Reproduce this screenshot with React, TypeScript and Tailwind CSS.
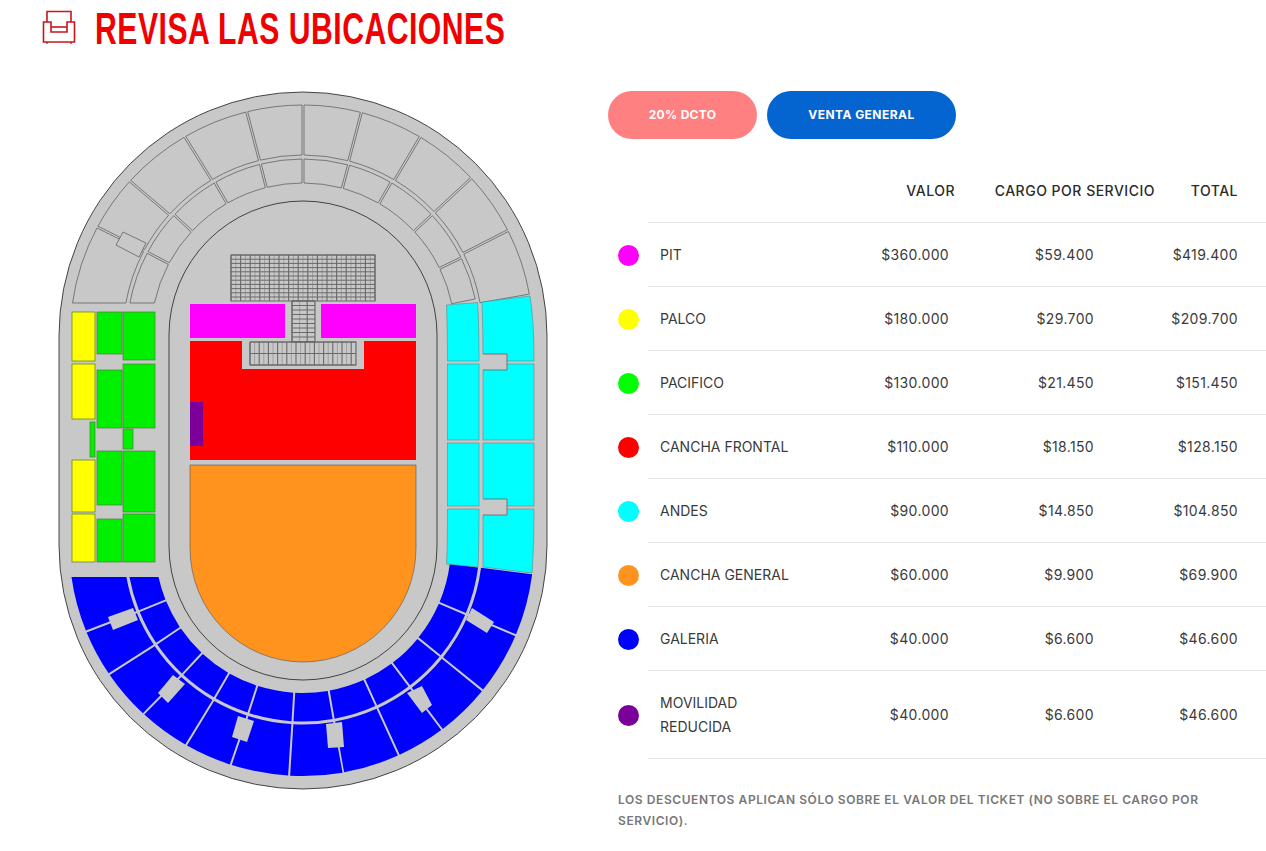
const rows = [
  { name: ["PIT"], color: "bg-[#ff00ff]", valor: "$360.000", cargo: "$59.400", total: "$419.400" },
  { name: ["PALCO"], color: "bg-[#ffff00]", valor: "$180.000", cargo: "$29.700", total: "$209.700" },
  { name: ["PACIFICO"], color: "bg-[#00ff00]", valor: "$130.000", cargo: "$21.450", total: "$151.450" },
  { name: ["CANCHA FRONTAL"], color: "bg-[#ff0000]", valor: "$110.000", cargo: "$18.150", total: "$128.150" },
  { name: ["ANDES"], color: "bg-[#00ffff]", valor: "$90.000", cargo: "$14.850", total: "$104.850" },
  { name: ["CANCHA GENERAL"], color: "bg-[#ff931e]", valor: "$60.000", cargo: "$9.900", total: "$69.900" },
  { name: ["GALERIA"], color: "bg-[#0000ff]", valor: "$40.000", cargo: "$6.600", total: "$46.600" },
  { name: ["MOVILIDAD", "REDUCIDA"], color: "bg-[#7b0099]", valor: "$40.000", cargo: "$6.600", total: "$46.600" },
]

const GRAY = "#c8c8c8"
const GREEN = "#00f000"
const CX = 303
const rad = (d: number) => (d * Math.PI) / 180
const deg = (r: number) => (r * 180) / Math.PI

// angle 0 points up for the top half (sign -1) and down for the bottom half (sign 1)
function sector(cy: number, sign: number, rOut: number, rIn: number, a1: number, a2: number, gap: number, flatStart: boolean, stretch: number) {
  const pt = (r: number, a: number, k: number) =>
    `${(CX + r * k * Math.sin(rad(a))).toFixed(2)} ${(cy + sign * r * Math.cos(rad(a))).toFixed(2)}`
  const inset = (r: number) => deg(gap / 2 / r)
  const start = (r: number) => (flatStart ? -deg(Math.acos(32 / r)) : a1 + inset(r))
  const sweep = sign < 0 ? 1 : 0
  return `M${pt(rOut, start(rOut), stretch)} A${rOut * stretch} ${rOut} 0 0 ${sweep} ${pt(rOut, a2 - inset(rOut), stretch)} L${pt(rIn, a2 - inset(rIn), 1)} A${rIn} ${rIn} 0 0 ${1 - sweep} ${pt(rIn, start(rIn), 1)} Z`
}

function Ring({ cy, sign, rOut, rIn, angles, fill, stroke, gap, stretch = 1 }: { cy: number; sign: number; rOut: number; rIn: number; angles: number[]; fill: string; stroke: string; gap: number; stretch?: number }) {
  return (
    <>
      {angles.slice(0, -1).map((a, i) => (
        <path key={a} d={sector(cy, sign, rOut, rIn, a, angles[i + 1], gap, i === 0, a < 0 ? stretch : 1)} fill={fill} stroke={stroke} strokeWidth={0.7} />
      ))}
    </>
  )
}

function SeatGrid({ x, y, w, h, colStep, rowStep }: { x: number; y: number; w: number; h: number; colStep: number; rowStep: number }) {
  const cols = Array.from({ length: Math.floor(w / colStep) + 1 }, (_, i) => x + i * colStep)
  const lines = Array.from({ length: Math.floor(h / rowStep) + 1 }, (_, i) => y + i * rowStep)
  return (
    <g stroke="#696969">
      {cols.map((c, i) => (
        <line key={c} x1={c} y1={y} x2={c} y2={y + h} strokeWidth={i % 2 === 0 ? 1.1 : 0.7} strokeOpacity={i % 2 === 0 ? 1 : 0.6} />
      ))}
      {lines.map((l) => (
        <line key={l} x1={x} y1={l} x2={x + w} y2={l} strokeWidth={1} />
      ))}
      <rect x={x} y={y} width={w} height={h} fill="none" strokeWidth={1} />
    </g>
  )
}

function Poly({ points }: { points: string }) {
  return <polygon points={points} fill={GRAY} />
}

function Box({ x, y, x2, y2, fill }: { x: number; y: number; x2: number; y2: number; fill: string }) {
  return <rect x={x} y={y} width={x2 - x} height={y2 - y} fill={fill} stroke="#4d7a3a" strokeWidth={0.7} />
}

function StadiumMap() {
  const topOuter = [-82, -62, -48, -30.5, -14, 0, 14.7, 30.6, 47, 63, 80]
  const topInner = [-80, -62, -47, -30, -14, 0, 15, 30, 47, 64, 78.5]
  const bottom = [-82, -68, -56, -43, -30, -18, -3.4, 10, 24.5, 37, 51, 67, 83]
  return (
    <svg width="608" height="704" viewBox="0 90 608 704" className="block">
      <rect x="59" y="92" width="488" height="697" rx="244" fill={GRAY} stroke="#333" strokeWidth="0.9" />

      {/* upper stands */}
      <Ring cy={335} sign={-1} rOut={230} rIn={180} angles={topOuter} fill={GRAY} stroke="#555" gap={2} stretch={1.012} />
      <Ring cy={335} sign={-1} rOut={176} rIn={152} angles={topInner} fill={GRAY} stroke="#555" gap={2} />
      <polygon points="123,232 146,243 139,257 116,245" fill={GRAY} stroke="#555" strokeWidth={0.7} />

      {/* galeria */}
      <Ring cy={545} sign={1} rOut={231} rIn={179.5} angles={bottom} fill="#0000ff" stroke="none" gap={2} stretch={1.012} />
      <Ring cy={545} sign={1} rOut={176.5} rIn={148} angles={bottom} fill="#0000ff" stroke="none" gap={2} />
      <Poly points="326,724 342,722 344,747 328,748" />
      <Poly points="407,693 422,686 432,705 422,713" />
      <Poly points="472,608 494,622 487,633 466,620" />
      <Poly points="238,716 254,721 247,742 232,737" />
      <Poly points="173,675 185,684 168,703 158,693" />
      <Poly points="108,617 133,608 138,620 113,630" />

      {/* andes */}
      <g fill="#00ffff" stroke="#5a8a8a" strokeWidth="0.6">
        <path d="M446.5 305 L477.5 302.5 Q479 320 479 361 L447.5 361 Q447.5 330 446.5 305 Z" />
        <rect x="447.5" y="364" width="31.5" height="76" />
        <rect x="447.5" y="443" width="31.5" height="63" />
        <path d="M447.5 509 L479 509 Q479 545 478 567 L446.5 564 Q447.5 545 447.5 509 Z" />
        <path d="M482 302 L530 296 Q534 320 534 361 L483 361 Q483 330 482 302 Z" />
        <rect x="483" y="364" width="51" height="76" />
        <rect x="483" y="443" width="51" height="63" />
        <path d="M483 509 L534 509 Q534 545 532 573 L483 567 Z" />
      </g>
      <Poly points="480,354 507,354 507,370 480,370" />
      <path d="M483 354 H507 V370 H483" fill="none" stroke="#555" strokeWidth="0.7" />
      <Poly points="480,499 507,499 507,515 480,515" />
      <path d="M483 499 H507 V515 H483" fill="none" stroke="#555" strokeWidth="0.7" />

      {/* pacifico y palco */}
      <Box x={72} y={312} x2={95} y2={361} fill="#ffff00" />
      <Box x={72} y={364} x2={95} y2={419} fill="#ffff00" />
      <Box x={72} y={460} x2={95} y2={512} fill="#ffff00" />
      <Box x={72} y={514} x2={95} y2={562} fill="#ffff00" />
      <Box x={97} y={312} x2={122} y2={354} fill={GREEN} />
      <Box x={97} y={370} x2={122} y2={428} fill={GREEN} />
      <Box x={97} y={451} x2={122} y2={505} fill={GREEN} />
      <Box x={97} y={519} x2={122} y2={562} fill={GREEN} />
      <Box x={123} y={312} x2={155} y2={360} fill={GREEN} />
      <Box x={123} y={364} x2={155} y2={428} fill={GREEN} />
      <Box x={123} y={451} x2={155} y2={512} fill={GREEN} />
      <Box x={123} y={514} x2={155} y2={562} fill={GREEN} />
      <Box x={90} y={422} x2={95} y2={457} fill={GREEN} />
      <Box x={123} y={429} x2={133} y2={449} fill={GREEN} />

      {/* cancha */}
      <rect x="169" y="201" width="268" height="479" rx="134" fill={GRAY} stroke="#333" strokeWidth="0.9" />
      <path d="M190 465 H416 V548 A113 114 0 0 1 190 548 Z" fill="#ff931e" stroke="#555" strokeWidth="0.6" />
      <path d="M190 341 H242 V369 H364 V341 H416 V460 H190 Z" fill="#ff0000" />
      <rect x="190" y="304" width="95" height="34" fill="#ff00ff" />
      <rect x="321" y="304" width="95" height="34" fill="#ff00ff" />
      <rect x="190" y="402" width="13" height="44" fill="#7b0099" />

      {/* escenario */}
      <SeatGrid x={231} y={255} w={144} h={46} colStep={4.8} rowStep={4.2} />
      <SeatGrid x={292} y={301} w={23} h={41} colStep={7.6} rowStep={4.5} />
      <SeatGrid x={250} y={342} w={106} h={23} colStep={4.6} rowStep={11.5} />
    </svg>
  )
}

function ArmchairIcon() {
  return (
    <svg width="34" height="36" viewBox="0 0 34 36" fill="none" stroke="#c8161d" strokeWidth="1.6" className="shrink-0">
      <path d="M5 12 V1.5 H29 V12" />
      <path d="M1.5 12 H9 V22 H25 V12 H32.5 V32 H1.5 Z" />
      <path d="M9 17 H25" />
      <path d="M5 32 V33.8 M29 32 V33.8" />
    </svg>
  )
}

export default function App() {
  return (
    <div className="w-[1266px] h-[851px] overflow-hidden bg-white font-['Inter','Liberation_Sans',sans-serif] text-[#3a3a3a]">
      <div className="h-[90px] pl-[42px] pt-[10px] flex items-start">
        <ArmchairIcon />
        <h1 className="ml-[19px] -mt-[9px] text-[45px] leading-[56px] font-bold tracking-[0.75px] text-[#f00000] whitespace-nowrap origin-left scale-x-[0.67] font-['Liberation_Sans',sans-serif]">
          REVISA LAS UBICACIONES
        </h1>
      </div>

      <div className="flex">
        <div className="w-[608px] shrink-0">
          <StadiumMap />
        </div>

        <div className="flex-1 min-w-0 pt-px">
          <div className="flex gap-[10px]">
            <button type="button" className="w-[149px] h-12 rounded-full bg-[#ff8080] text-white text-[12px] font-bold tracking-[0.3px]">
              20% DCTO
            </button>
            <button type="button" className="w-[189px] h-12 rounded-full bg-[#0565d0] text-white text-[12px] font-bold tracking-[0.45px]">
              VENTA GENERAL
            </button>
          </div>

          <div className="ml-[40px] h-[84px] border-b border-[#e8e8e8] flex items-start pt-[42px] text-[14px] leading-[20px] font-medium tracking-[0.5px] text-[#2b2b2b] whitespace-nowrap">
            <div className="w-[307px] text-right">VALOR</div>
            <div className="w-[200px] text-right">CARGO POR SERVICIO</div>
            <div className="w-[83px] text-right">TOTAL</div>
          </div>

          {rows.map((row) => (
            <div key={row.name[0]} className="flex items-center pl-[10px]">
              <div className={`w-[21px] h-[21px] rounded-full shrink-0 ${row.color}`} />
              <div className={`ml-[9px] flex-1 flex items-center border-b border-[#e8e8e8] text-[14px] leading-[24px] ${row.name.length > 1 ? "h-[88px]" : "h-16"}`}>
                <div className="w-[161px] pl-3">
                  {row.name.map((n) => (
                    <div key={n}>{n}</div>
                  ))}
                </div>
                <div className="w-[140px] text-right tracking-[0.35px]">{row.valor}</div>
                <div className="w-[145px] text-right tracking-[0.35px]">{row.cargo}</div>
                <div className="w-[144px] text-right tracking-[0.35px]">{row.total}</div>
              </div>
            </div>
          ))}

          <p className="mt-[30px] ml-[10px] w-[620px] text-[12px] leading-[21px] font-semibold tracking-[0.58px] text-[#777777]">
            LOS DESCUENTOS APLICAN SÓLO SOBRE EL VALOR DEL TICKET (NO SOBRE EL CARGO POR SERVICIO).
          </p>
        </div>
      </div>
    </div>
  )
}
